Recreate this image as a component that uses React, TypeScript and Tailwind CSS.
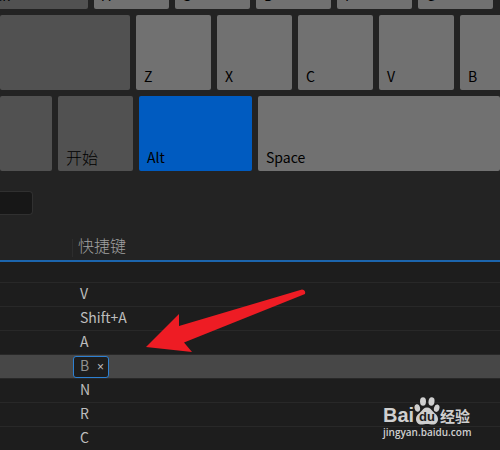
import type { ReactNode } from "react";

type KeyTone = "dark" | "light" | "active";

const tones: Record<KeyTone, string> = {
  dark: "bg-[#515151]",
  light: "bg-[#717171]",
  active: "bg-[#005bc0]",
};

type KeyProps = { label?: string; tone?: KeyTone; size?: string; text?: string };

function Key({ label, tone = "light", size = "w-[75px]", text = "text-sm" }: KeyProps) {
  return (
    <button
      type="button"
      aria-label={label ?? "Modifier"}
      className={`flex h-full shrink-0 items-end rounded-[2px] px-2 pb-1 text-left leading-5 whitespace-nowrap text-black ${text} ${tones[tone]} ${size}`}
    >
      {label}
    </button>
  );
}

function KeyRow({ children }: { children: ReactNode }) {
  return <div className="flex h-[75px] gap-1.5">{children}</div>;
}

function Watermark() {
  return (
    <div className="absolute top-[396px] left-[383px] text-[#cfcfcf]">
      <div className="flex h-[29px] items-end">
        <span className="w-[31px] font-['Liberation_Sans',sans-serif] text-xl leading-5 font-bold">Bai</span>
        <div className="relative h-[29px] w-[26px]">
          <svg viewBox="0 0 26 29" className="h-[29px] w-[26px]" fill="currentColor" aria-hidden="true">
            <ellipse cx="9" cy="5.500" rx="3" ry="4.200" />
            <ellipse cx="17.500" cy="5.500" rx="3" ry="4.200" transform="rotate(8 17.500 5.500)" />
            <ellipse cx="3.300" cy="12" rx="2.700" ry="3.800" transform="rotate(-14 3.300 12)" />
            <ellipse cx="22.700" cy="12.200" rx="2.700" ry="3.800" transform="rotate(16 22.700 12.200)" />
            <path d="M13 11.500c3 0 4.200 2 5.700 3.800 2 2.300 5.300 3.900 5.300 7.700 0 3.500-2.300 5.500-5.300 5.500-2 0-3.700-.6-5.700-.6s-3.700.6-5.700.6C4.300 28.500 2 26.500 2 23c0-3.800 3.300-5.400 5.300-7.700 1.500-1.800 2.700-3.800 5.700-3.800z" />
          </svg>
          <span className="absolute inset-x-0 bottom-0.5 text-center font-['Liberation_Sans',sans-serif] text-[13px] leading-3 font-bold text-[#1d1d1d]">du</span>
        </div>
        <span className="font-['Noto_Sans_CJK_SC',sans-serif] text-[15px] leading-[18px] font-bold">经验</span>
      </div>
      <div className="font-['Open_Sans',sans-serif] text-[10px] leading-3.5 font-semibold">jingyan.baidu.com</div>
    </div>
  );
}

const shortcuts = ["", "V", "Shift+A", "A", "B", "N", "R", "C"];

export default function App() {
  return (
    <main className="relative h-screen overflow-hidden bg-[#232323] font-['Noto_Sans_CJK_SC',sans-serif]">
      <section aria-label="Keyboard" className="flex flex-col gap-1.5">
        <div className="flex h-[9px] items-end overflow-hidden">
          <KeyRow>
            <Key label="Caps Lock" tone="dark" size="-ml-[64px] w-[152px]" />
            {["A", "S", "D", "F", "G"].map((k) => <Key key={k} label={k} />)}
          </KeyRow>
        </div>
        <KeyRow>
          <Key tone="dark" size="w-[130px]" />
          {["Z", "X", "C", "V", "B"].map((k) => <Key key={k} label={k} />)}
        </KeyRow>
        <KeyRow>
          <Key tone="dark" size="w-[52px]" />
          <Key label="开始" tone="dark" text="text-base font-light" />
          <Key label="Alt" tone="active" size="w-[113px]" />
          <Key label="Space" size="grow" />
        </KeyRow>
      </section>

      <input aria-label="Search" className="mt-5 block h-6 w-[33px] rounded-r border border-l-0 border-[#303030] bg-[#171717]" />

      <table className="mt-6 w-full border-separate border-spacing-0 text-sm">
        <thead>
          <tr>
            <th className="w-[72px] border-b-2 border-[#1c65ad] p-0" />
            <th className="border-b-2 border-[#1c65ad] p-0 pb-[3px] text-left text-base font-light text-[#a0a0a0]">
              <div className="h-[18px] border-l border-[#2d2d2d] pl-[5px] leading-3">快捷键</div>
            </th>
          </tr>
        </thead>
        <tbody>
          {shortcuts.map((s, i) => (
            <tr key={i} className={`text-[#bdbdbd] ${s ? "h-6" : "h-[21px]"} ${s === "B" ? "bg-[#474747]" : "bg-[#1d1d1d]"}`}>
              <td className="border-b border-[#282828] p-0" />
              <td className="border-b border-[#282828] p-0 pl-px leading-4">
                {s === "B" ? (
                  <div className="flex h-[22px] w-9 items-center justify-between rounded-[3px] border border-[#2d80d2] bg-[#1d1d1d] pr-1 pb-1 pl-1.5 text-[#909090]">
                    B
                    <button type="button" aria-label="Remove B" className="pt-1 font-['Liberation_Sans',sans-serif] text-xs leading-3 text-[#bdbdbd]">×</button>
                  </div>
                ) : (
                  <div className="pb-1 pl-[7px]">{s}</div>
                )}
              </td>
            </tr>
          ))}
        </tbody>
      </table>

      <svg viewBox="0 0 160 66" className="absolute top-[288px] left-[146px] h-[66px] w-40" fill="#ee1c24" aria-hidden="true">
        <path d="M0 59 33 26 33 38 156 1.500Q160 2 159 6L38 54.500 46 64Z" />
      </svg>
      <Watermark />
    </main>
  );
}
